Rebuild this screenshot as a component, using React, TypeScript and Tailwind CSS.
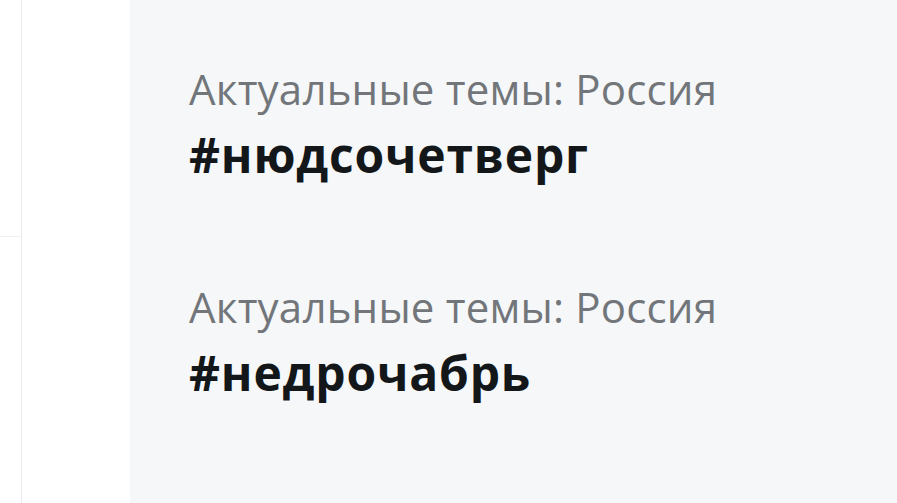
const trends = ['#нюдсочетверг', '#недрочабрь'];

export default function App() {
  return (
    <div className="flex h-[503px] w-[897px] overflow-hidden bg-white font-['Open_Sans',sans-serif]">
      <div className="w-[22px] shrink-0 border-r border-[#e9edf0]">
        <div className="h-[237px] border-b border-[#eef1f3]" />
      </div>
      <div className="w-[108px] shrink-0" />
      <div className="flex flex-1 flex-col gap-[100px] bg-[#f5f7f8] pl-[59px] pt-[65px]">
        {trends.map((tag) => (
          <div key={tag} className="flex flex-col gap-[14px]">
            <span className="text-[42px] leading-[48px] tracking-[0.2px] text-[#72767a]">Актуальные темы: Россия</span>
            <span className="text-[48px] font-bold leading-[56px] tracking-[0.8px] text-[#14171a]">{tag}</span>
          </div>
        ))}
      </div>
    </div>
  );
}
